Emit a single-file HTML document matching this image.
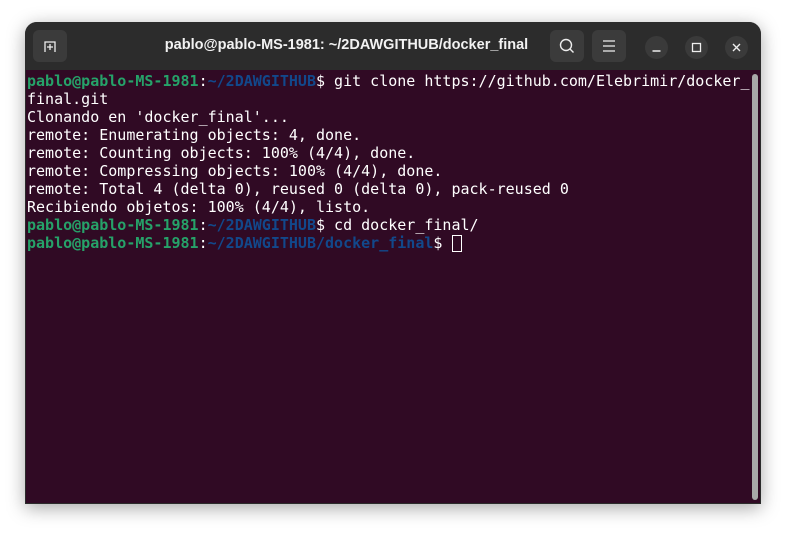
<!DOCTYPE html>
<html><head><meta charset="utf-8"><style>
html,body{margin:0;padding:0;width:786px;height:533px;background:#fff;overflow:hidden}
.win{position:absolute;left:25px;top:22px;width:736px;height:482px;border-radius:12px 12px 0 0;background:#2b2b2b;box-shadow:0 4px 18px rgba(0,0,0,.35);overflow:hidden}
.tb{position:absolute;left:0;top:0;width:736px;height:48px;background:#2c2c2c}
.btn{position:absolute;top:8px;width:34px;height:32px;border-radius:6px;background:#3b3b3b}
.cbtn{position:absolute;top:14px;width:23px;height:23px;border-radius:50%;background:#3a3a3a}
.title{position:absolute;left:137px;width:369px;top:15px;text-align:center;color:#f2f2f2;font:bold 14.5px "Liberation Sans",sans-serif;white-space:nowrap}
.term{position:absolute;left:1px;top:48px;width:734px;height:433px;background:#300a24}
pre{margin:0;position:absolute;left:1px;top:2px;font:15px/18px "DejaVu Sans Mono","Liberation Mono",monospace;color:#fff}
.g{color:#26a269;font-weight:bold}.b{color:#12488b;font-weight:bold}
.cur{display:inline-block;width:10px;height:17px;border:1px solid #fff;box-sizing:border-box;vertical-align:-4px;margin-left:1px}
.sb{position:absolute;left:726px;top:4px;width:6px;height:426px;border-radius:3px;background:#a8a8a8}
</style></head><body>
<div class="win">
 <div class="tb">
  <div class="btn" style="left:8px"><svg width="34" height="32"><path d="M12 22V12h10v10M17 14v6M14 17h6" stroke="#eee" stroke-width="1.3" fill="none"/></svg></div>
  <div class="title">pablo@pablo-MS-1981: ~/2DAWGITHUB/docker_final</div>
  <div class="btn" style="left:525px"><svg width="34" height="32"><circle cx="16" cy="15" r="5.5" stroke="#eee" stroke-width="1.4" fill="none"/><path d="M20 19l3.5 3.5" stroke="#eee" stroke-width="1.4"/></svg></div>
  <div class="btn" style="left:567px"><svg width="34" height="32"><path d="M11 11h12M11 16h12M11 21h12" stroke="#eee" stroke-width="1.2"/></svg></div>
  <div class="cbtn" style="left:620px"><svg width="23" height="23"><path d="M7.5 15h8" stroke="#eee" stroke-width="1.4"/></svg></div>
  <div class="cbtn" style="left:660px"><svg width="23" height="23"><rect x="7.5" y="7.5" width="8" height="8" stroke="#eee" stroke-width="1.3" fill="none"/></svg></div>
  <div class="cbtn" style="left:700px"><svg width="23" height="23"><path d="M8 8l7 7M15 8l-7 7" stroke="#eee" stroke-width="1.4"/></svg></div>
 </div>
 <div class="term">
<pre><span class="g">pablo@pablo-MS-1981</span>:<span class="b">~/2DAWGITHUB</span>$ git clone https://github.com/Elebrimir/docker_
final.git
Clonando en 'docker_final'...
remote: Enumerating objects: 4, done.
remote: Counting objects: 100% (4/4), done.
remote: Compressing objects: 100% (4/4), done.
remote: Total 4 (delta 0), reused 0 (delta 0), pack-reused 0
Recibiendo objetos: 100% (4/4), listo.
<span class="g">pablo@pablo-MS-1981</span>:<span class="b">~/2DAWGITHUB</span>$ cd docker_final/
<span class="g">pablo@pablo-MS-1981</span>:<span class="b">~/2DAWGITHUB/docker_final</span>$ <span class="cur"></span></pre>
  <div class="sb"></div>
 </div>
</div>
</body></html>
